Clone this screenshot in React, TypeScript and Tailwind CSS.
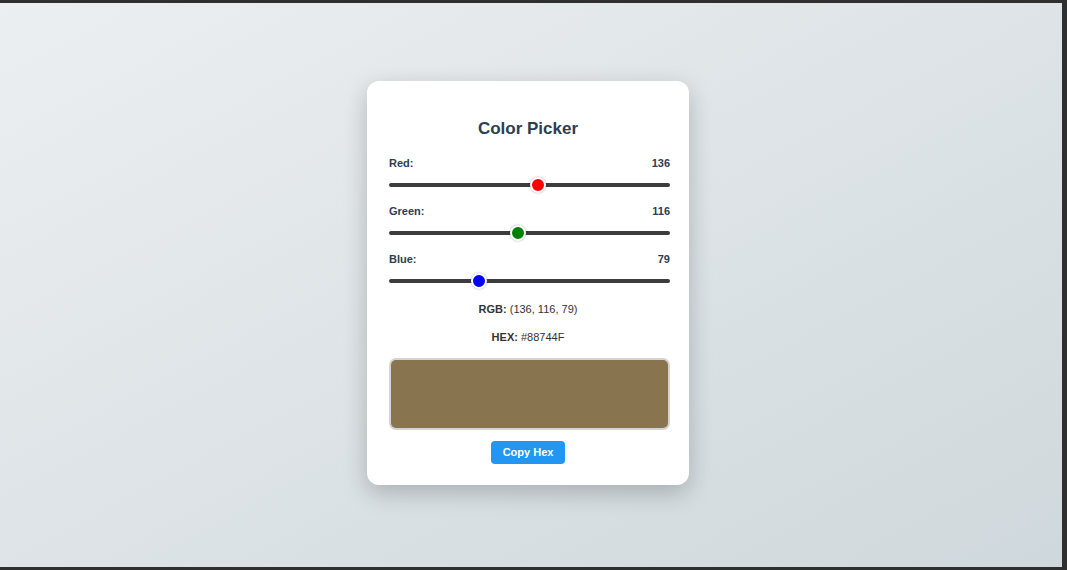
import React, { useState } from 'react';

const thumbBase =
    'appearance-none w-full h-[4px] rounded-full bg-[#3d3d3d] outline-none cursor-pointer [&::-webkit-slider-thumb]:appearance-none [&::-webkit-slider-thumb]:w-[16px] [&::-webkit-slider-thumb]:h-[16px] [&::-webkit-slider-thumb]:rounded-full [&::-webkit-slider-thumb]:border-2 [&::-webkit-slider-thumb]:border-white [&::-webkit-slider-thumb]:shadow-[0_0_2px_rgba(0,0,0,0.35)]';

const channels = [
    { key: 'r', label: 'Red:', thumb: '[&::-webkit-slider-thumb]:bg-[#ff0000]' },
    { key: 'g', label: 'Green:', thumb: '[&::-webkit-slider-thumb]:bg-[#008000]' },
    { key: 'b', label: 'Blue:', thumb: '[&::-webkit-slider-thumb]:bg-[#0000ff]' },
] as const;

type Rgb = { r: number; g: number; b: number };

const toHex = (c: Rgb) =>
    '#' +
    [c.r, c.g, c.b]
        .map((v) => v.toString(16).padStart(2, '0'))
        .join('')
        .toUpperCase();

const App = () => {
    const [color, setColor] = useState<Rgb>({ r: 136, g: 116, b: 79 });
    const hex = toHex(color);

    return (
        <div className="w-full h-[570px] bg-[#2f2f2f] pt-[3px] pr-[5px] pb-[3px] font-['Liberation_Sans',Arial,sans-serif]">
            <div className="w-full h-full flex items-center justify-center pr-[6px] pb-[4px] bg-gradient-to-br from-[#eceff1] to-[#cfd8dc]">
                <div className="w-[322px] bg-white rounded-[12px] shadow-[0_8px_24px_rgba(0,0,0,0.22)] px-[22px] pt-[37px] pb-[21px] flex flex-col">
                    <h2 className="text-center text-[17px] leading-[21px] font-bold text-[#2c3e50]">
                        Color Picker
                    </h2>
                    <div className="mt-[17px] w-[calc(100%+3px)] flex flex-col gap-[11px]">
                        {channels.map((ch) => (
                            <div key={ch.key} className="flex flex-col gap-[7px]">
                                <div className="flex justify-between text-[11px] leading-[14px] font-bold text-[#2c3e50]">
                                    <span>{ch.label}</span>
                                    <span>{color[ch.key]}</span>
                                </div>
                                <div className="h-[16px] flex items-center">
                                    <input
                                        type="range"
                                        min={0}
                                        max={255}
                                        value={color[ch.key]}
                                        onChange={(e) =>
                                            setColor({ ...color, [ch.key]: Number(e.target.value) })
                                        }
                                        className={thumbBase + ' ' + ch.thumb}
                                    />
                                </div>
                            </div>
                        ))}
                    </div>
                    <p className="mt-[13px] text-center text-[11px] leading-[14px] text-[#333]">
                        <span className="font-bold">RGB:</span> ({color.r}, {color.g}, {color.b})
                    </p>
                    <p className="mt-[14px] text-center text-[11px] leading-[14px] text-[#333]">
                        <span className="font-bold">HEX:</span> {hex}
                    </p>
                    <div
                        className="mt-[14px] w-[calc(100%+3px)] h-[72px] rounded-[7px] border-2 border-[#d4d4d4]"
                        style={{ backgroundColor: hex }}
                    />
                    <div className="mt-[11px] flex justify-center">
                        <button
                            onClick={() => navigator.clipboard?.writeText(hex)}
                            className="h-[23px] px-[12px] rounded-[4px] bg-[#2196f3] text-white text-[11px] font-bold"
                        >
                            Copy Hex
                        </button>
                    </div>
                </div>
            </div>
        </div>
    );
};

export default App;
